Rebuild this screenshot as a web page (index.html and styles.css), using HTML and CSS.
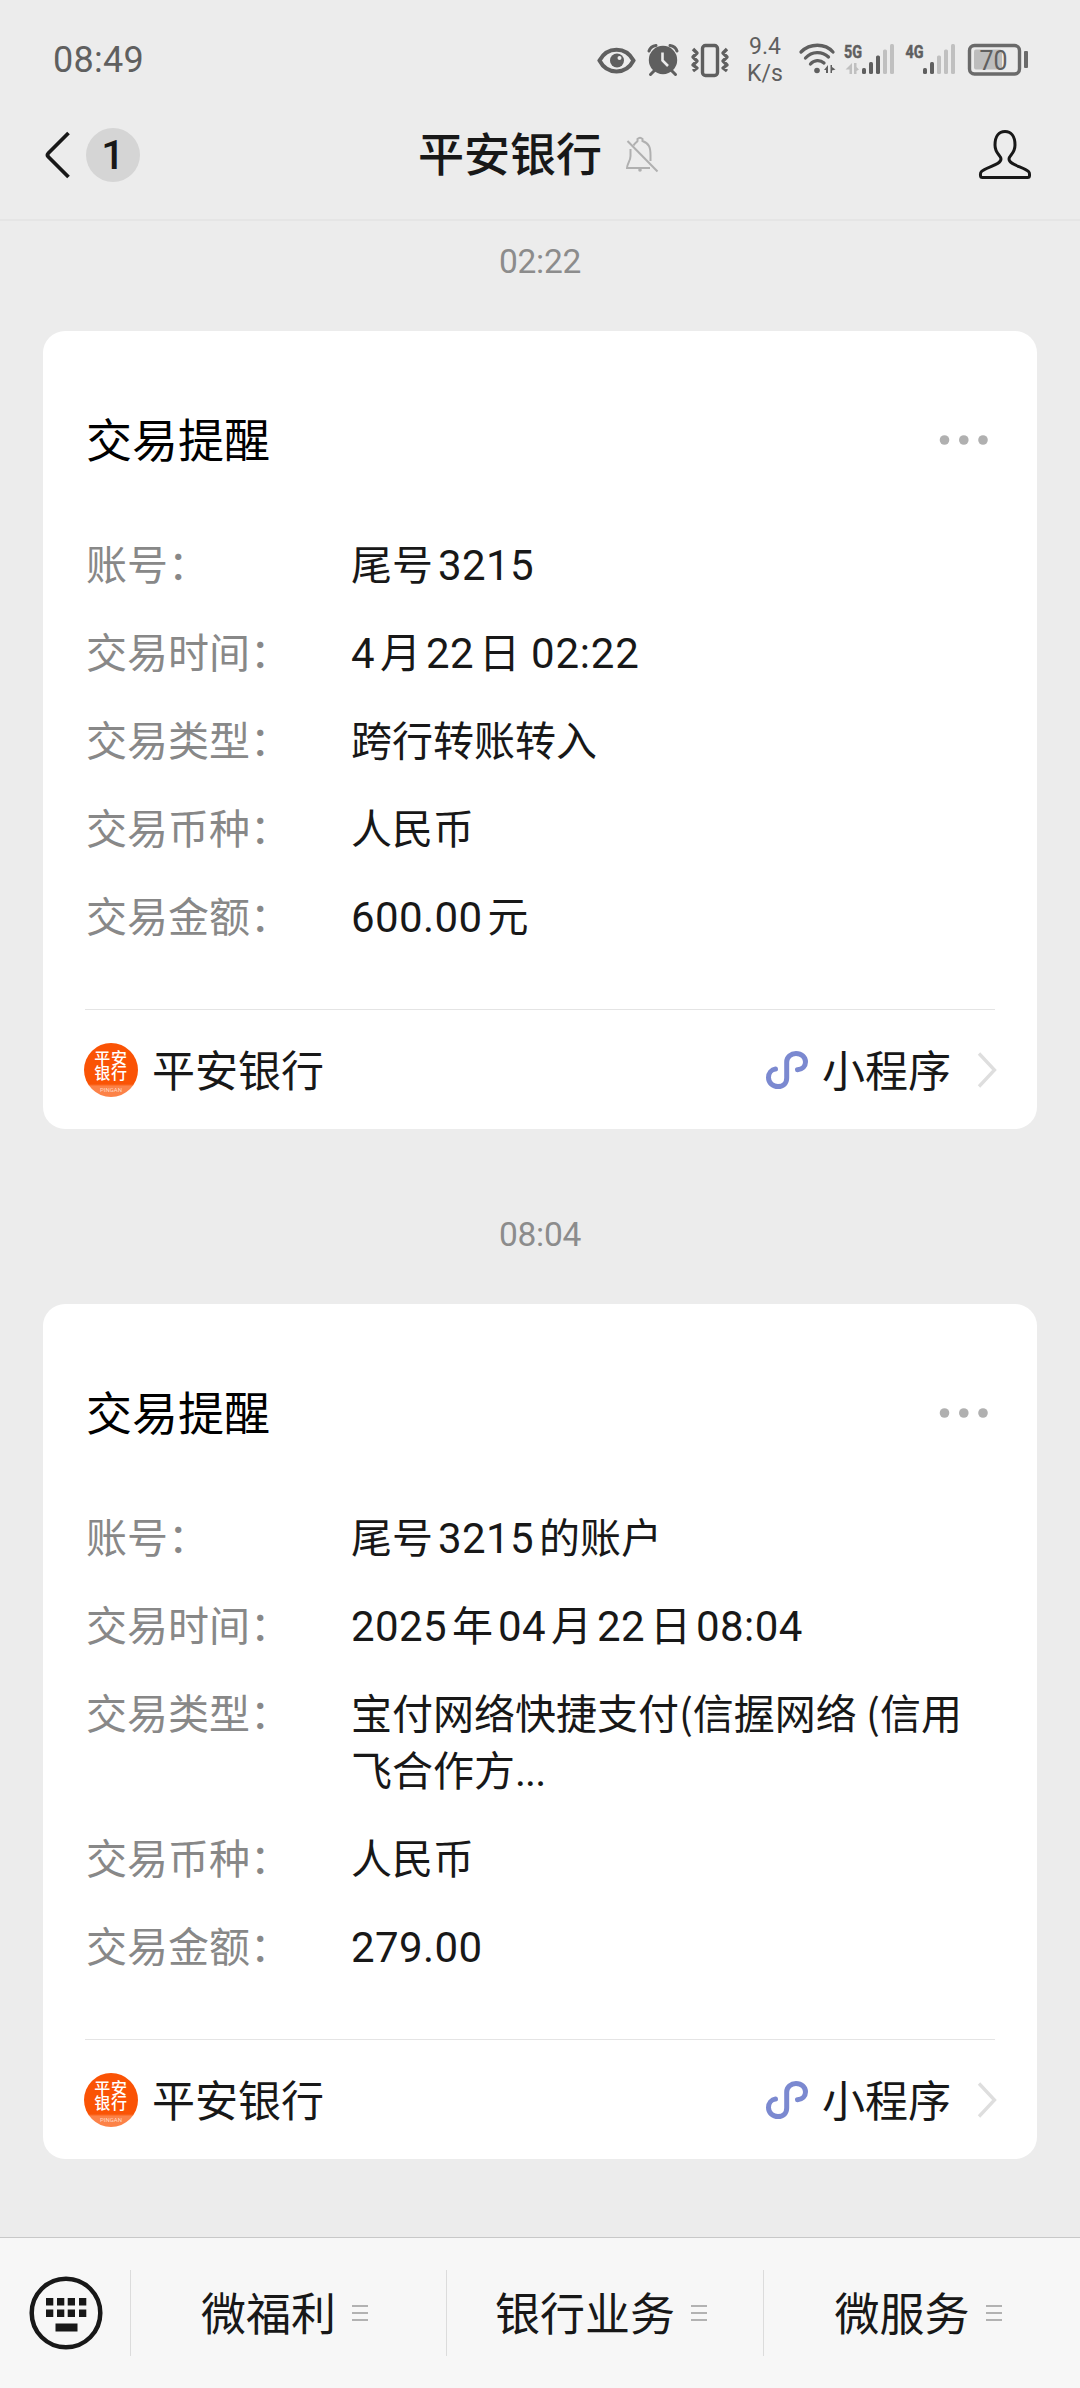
FILE: index.html
```html
<!DOCTYPE html>
<html lang="zh-CN">
<head>
<meta charset="utf-8">
<title>平安银行</title>
<link rel="stylesheet" href="styles.css">
</head>
<body>
<svg class="defs" aria-hidden="true">
  <symbol id="mini" viewBox="0 0 42 38">
    <path d="M9.500 18C5.500 18.500 2.500 22 2.500 26.500C2.500 32 7 35.500 12 35.500C17.500 35.500 20.700 32 20.700 27V11C20.700 6 25 2.500 30 2.500C35.500 2.500 39.500 6 39.500 11C39.500 15 36.500 18.300 31.500 18.700" fill="none" stroke="#7b89d0" stroke-width="5" stroke-linecap="round"/>
  </symbol>
  <symbol id="next" viewBox="0 0 20 36">
    <path d="M2 1.500L17.500 18L2 34.500" fill="none" stroke="#dedede" stroke-width="3.300"/>
  </symbol>
  <symbol id="dots" viewBox="0 0 50 12">
    <g fill="#b0b0b0"><circle cx="5.500" cy="6" r="4.800"/><circle cx="24.800" cy="6" r="4.800"/><circle cx="44" cy="6" r="4.800"/></g>
  </symbol>
  <symbol id="lines" viewBox="0 0 16 18">
    <path d="M0 2H16M0 9H16M0 16H16" stroke="#b2b2b2" stroke-width="2"/>
  </symbol>
</svg>

<div class="status">
  <span class="clock">08:49</span>
  <div class="tray">
    <svg class="eye" viewBox="597 40 40 40">
      <path d="M599.500 60.500C607 46 626 46 633.500 60.500C626 75 607 75 599.500 60.500Z" fill="none" stroke="#5f5f5f" stroke-width="4"/>
      <circle cx="617" cy="60.500" r="7" fill="#5f5f5f"/><circle cx="619.500" cy="58" r="2" fill="#ececec"/>
    </svg>
    <svg class="alarm" viewBox="646 40 34 40">
      <circle cx="663" cy="60" r="14.200" fill="#5f5f5f"/>
      <path d="M649 51C650 48 652.500 46 656 45.500M677 51C676 48 673.500 46 670 45.500M654 71L650.500 74.500M672 71L675.500 74.500" fill="none" stroke="#5f5f5f" stroke-width="3" stroke-linecap="round"/>
      <path d="M662.500 52.500V60.500L668 66" fill="none" stroke="#ececec" stroke-width="2.600"/>
    </svg>
    <svg class="vibrate" viewBox="690 40 40 40">
      <rect x="702.500" y="45.500" width="15" height="30" rx="3" fill="none" stroke="#5f5f5f" stroke-width="3.400"/>
      <path d="M693 49L697 53L693 57L697 61L693 65L697 68L693 71M727 49L723 53L727 57L723 61L727 65L723 68L727 71" fill="none" stroke="#5f5f5f" stroke-width="3.400" stroke-linejoin="round"/>
    </svg>
    <div class="speed"><span>9.4</span><span>K/s</span></div>
    <svg class="wifi" viewBox="798 40 40 40">
      <g fill="none" stroke="#5f5f5f" stroke-width="3.300" stroke-linecap="round">
        <path d="M801 52C810 43 825 43 833 52"/><path d="M805.500 58C812 51 822 51 828.500 57"/><path d="M810.500 64C814 60 820 59.500 824 63"/>
      </g>
      <circle cx="817" cy="70.500" r="2.800" fill="#5f5f5f"/>
      <path d="M828 65V73H826V70H824ZM830.500 65V73H832V70.500L835.500 69.500L832 67V65Z" fill="#5f5f5f"/>
    </svg>
    <svg class="signal" viewBox="843 40 52 40">
      <text x="844" y="57.500" class="net" textLength="18" lengthAdjust="spacingAndGlyphs">5G</text>
      <path d="M852 63V74H849.500V69.500H845.500ZM854 63V74H856.500V71L859 69.500L856.500 67V63Z" fill="#c0c0c0"/>
      <g fill="#5f5f5f"><rect x="862" y="68" width="4" height="6" rx="1.500"/><rect x="869" y="62" width="4" height="12" rx="1.500"/><rect x="876" y="55.500" width="4" height="18.500" rx="1.500"/></g>
      <g fill="#c0c0c0"><rect x="883" y="49.500" width="4" height="24.500" rx="1.500"/><rect x="890" y="44" width="4" height="30" rx="1.500"/></g>
    </svg>
    <svg class="signal second" viewBox="904 40 52 40">
      <text x="905.500" y="57.500" class="net" textLength="18" lengthAdjust="spacingAndGlyphs">4G</text>
      <g fill="#5f5f5f"><rect x="923" y="68" width="4" height="6" rx="1.500"/><rect x="930" y="62" width="4" height="12" rx="1.500"/></g>
      <g fill="#c0c0c0"><rect x="937" y="55.500" width="4" height="18.500" rx="1.500"/><rect x="944" y="49.500" width="4" height="24.500" rx="1.500"/><rect x="951" y="44" width="4" height="30" rx="1.500"/></g>
    </svg>
    <svg class="battery" viewBox="966 40 64 40">
      <rect x="969.500" y="45.500" width="50" height="28.500" rx="5" fill="none" stroke="#6a6a6a" stroke-width="3.400"/>
      <rect x="974" y="49.500" width="28" height="20" rx="2" fill="#bdbdbd"/>
      <rect x="1024" y="51" width="4" height="17" rx="1" fill="#6a6a6a"/>
      <text x="979.500" y="69.500" class="level" textLength="28" lengthAdjust="spacingAndGlyphs">70</text>
    </svg>
  </div>
</div>

<header class="nav">
  <div class="back">
    <svg width="26" height="48" viewBox="0 0 26 48"><path d="M23.500 2L3.500 22Q1.500 24 3.500 26L23.500 46" fill="none" stroke="#181818" stroke-width="3.800"/></svg>
    <span class="unread">1</span>
  </div>
  <div class="name">
    <h1>平安银行</h1>
    <svg width="34" height="38" viewBox="625 136 34 38">
      <path d="M630.500 149V156C630.500 161 627 164 627 168H650M633.500 145.500C635 143 637 142 637.500 141V139Q640 136.500 642.500 139V141C649 143.500 650.500 147 650.500 155V161" fill="none" stroke="#b0b0b0" stroke-width="2"/>
      <path d="M627.500 141L657.500 171.500" stroke="#b0b0b0" stroke-width="2"/><circle cx="640" cy="170" r="1.800" fill="#b0b0b0"/>
    </svg>
  </div>
  <svg class="person" width="54" height="52" viewBox="978 130 54 52">
    <path d="M995 146C995 137 999 132.500 1005 132.500C1011 132.500 1015 137 1015 146C1015 155 1009 156 1009 160C1009 166 1024 168 1028.500 172.500C1030 174 1029.500 176 1029.500 176.500Q1029.500 178.500 1027.500 178.500H982.500Q980.500 178.500 980.500 176.500C980.500 176 980 174 981.500 172.500C986 168 1001 166 1001 160C1001 156 995 155 995 146Z" fill="none" stroke="#181818" stroke-width="3"/>
  </svg>
</header>

<main class="chat">
  <time>02:22</time>
  <section class="card">
    <div class="head"><h2>交易提醒</h2><svg width="50" height="12"><use href="#dots"/></svg></div>
    <dl>
      <dt>账号：</dt><dd>尾号<b class="after">3215</b></dd>
      <dt>交易时间：</dt><dd><b class="before">4</b>月<b class="both">22</b>日<b class="spaced">02:22</b></dd>
      <dt>交易类型：</dt><dd>跨行转账转入</dd>
      <dt>交易币种：</dt><dd>人民币</dd>
      <dt>交易金额：</dt><dd><b class="before">600.00</b>元</dd>
    </dl>
    <footer>
      <span class="logo"><span class="mark">平安<br>银行</span><span class="latin">PINGAN</span></span>
      <span class="bank">平安银行</span>
      <svg width="42" height="38"><use href="#mini"/></svg>
      <span class="app">小程序</span>
      <svg class="next" width="20" height="36"><use href="#next"/></svg>
    </footer>
  </section>

  <time class="later">08:04</time>
  <section class="card">
    <div class="head"><h2>交易提醒</h2><svg width="50" height="12"><use href="#dots"/></svg></div>
    <dl>
      <dt>账号：</dt><dd>尾号<b class="both">3215</b>的账户</dd>
      <dt>交易时间：</dt><dd><b class="before">2025</b>年<b class="both">04</b>月<b class="both">22</b>日<b class="after">08:04</b></dd>
      <dt>交易类型：</dt><dd>宝付网络快捷支付(信握网络 (信用<br>飞合作方<b class="more">...</b></dd>
      <dt>交易币种：</dt><dd>人民币</dd>
      <dt>交易金额：</dt><dd><b>279.00</b></dd>
    </dl>
    <footer>
      <span class="logo"><span class="mark">平安<br>银行</span><span class="latin">PINGAN</span></span>
      <span class="bank">平安银行</span>
      <svg width="42" height="38"><use href="#mini"/></svg>
      <span class="app">小程序</span>
      <svg class="next" width="20" height="36"><use href="#next"/></svg>
    </footer>
  </section>
</main>

<nav class="menu">
  <div class="keyboard">
    <svg width="74" height="74" viewBox="0 0 74 74">
      <circle cx="37" cy="37" r="34.300" fill="none" stroke="#181818" stroke-width="4.500"/>
      <path d="M17 22h7.300v7.500H17zM28 22h7.300v7.500H28zM38.700 22H46v7.500h-7.300zM50 22h7.300v7.500H50zM17 33.500h7.300V41H17zM28 33.500h7.300V41H28zM38.700 33.500H46V41h-7.300zM50 33.500h7.300V41H50zM26.500 47.500h22v8h-22z" fill="#181818"/>
    </svg>
  </div>
  <a><span>微福利</span><svg width="16" height="18"><use href="#lines"/></svg></a>
  <a><span>银行业务</span><svg width="16" height="18"><use href="#lines"/></svg></a>
  <a><span>微服务</span><svg width="16" height="18"><use href="#lines"/></svg></a>
</nav>
</body>
</html>
```
FILE: styles.css
```css
* { box-sizing: border-box; margin: 0; padding: 0; }

body {
  width: 1080px;
  height: 2388px;
  display: flex;
  flex-direction: column;
  background: #ececec;
  color: #181818;
  font-family: "Noto Sans CJK SC", sans-serif;
  font-weight: 400;
}

svg { display: block; flex: none; }
.defs { display: none; }

/* Status bar */
.status {
  height: 118px;
  padding: 0 50px 0 53px;
  display: flex;
  align-items: center;
  justify-content: space-between;
  color: #5f5f5f;
  font-family: Roboto, sans-serif;
}
.clock { padding-top: 2px; font-size: 36px; letter-spacing: .3px; }
.tray { display: flex; align-items: center; padding-top: 2px; }
.tray svg { height: 40px; }
.eye { width: 40px; }
.alarm { width: 34px; margin-left: 9px; }
.vibrate { width: 40px; margin-left: 10px; }
.speed {
  width: 40px;
  margin: 0 13px 0 15px;
  display: flex;
  flex-direction: column;
  align-items: center;
  font-size: 23px;
  line-height: 27px;
}
.wifi { width: 40px; }
.signal { width: 52px; margin-left: 5px; }
.signal.second { margin-left: 9px; }
.battery { width: 64px; margin-left: 10px; }
.net { font: 700 18px Roboto, sans-serif; fill: #5f5f5f; stroke: #5f5f5f; stroke-width: .5px; }
.level { font: 400 28px Roboto, sans-serif; fill: #5f5f5f; }

/* Title bar */
.nav {
  height: 103px;
  padding: 0 48px 28px 45px;
  display: grid;
  grid-template-columns: 1fr auto 1fr;
  align-items: center;
  border-bottom: 2px solid #e5e5e5;
}
.back { display: flex; align-items: center; gap: 15px; }
.unread {
  width: 54px;
  height: 54px;
  border-radius: 50%;
  background: #d5d5d5;
  font: 500 41px/55px Roboto, sans-serif;
  text-align: center;
}
.name { display: flex; align-items: center; gap: 23px; }
.name h1 { padding-bottom: 7px; font-size: 46px; font-weight: 500; line-height: 60px; }
.person { justify-self: end; }

/* Conversation */
.chat { flex: 1; padding: 0 43px; }
time {
  display: block;
  padding-top: 20px;
  height: 110px;
  text-align: center;
  color: #8c8c8c;
  font: 400 33.500px/42px Roboto, sans-serif;
  letter-spacing: -.3px;
}
time.later { height: 175px; padding-top: 85px; }

.card { padding: 0 42px; background: #fff; border-radius: 22px; }
.head {
  height: 203px;
  padding: 14px 6px 0 1px;
  display: flex;
  align-items: center;
  justify-content: space-between;
}
.head h2 { padding-bottom: 6px; color: #000; font-size: 46px; font-weight: 400; line-height: 60px; }

dl {
  padding-left: 1px;
  display: grid;
  grid-template-columns: 265px 1fr;
  row-gap: 31px;
  font-size: 41px;
  line-height: 57px;
  white-space: nowrap;
}
dt { color: #888; }
dd b { font: 400 42px/1 Roboto, sans-serif; letter-spacing: .4px; }
.before { margin-right: 5px; }
.after { margin-left: 5px; }
.both { margin: 0 5px; }
dd .spaced { margin-left: 11px; letter-spacing: .8px; }
dd .more { letter-spacing: -1px; }

.card footer {
  height: 120px;
  margin-top: 66px;
  border-top: 1px solid #e4e4e4;
  display: flex;
  align-items: center;
  font-size: 43px;
  line-height: 60px;
}
.logo {
  width: 54px;
  height: 54px;
  margin: 0 14px 0 -1px;
  padding-top: 7px;
  border-radius: 50%;
  overflow: hidden;
  background: linear-gradient(#fa5305 76%, #fc8248 80%);
  color: #fff;
  text-align: center;
}
.mark { display: block; font-size: 16px; font-weight: 500; line-height: 15px; letter-spacing: .7px; }
.latin { display: block; font: 400 6px/7px Roboto, sans-serif; margin-top: 6px; color: #ffd8c4; }
.bank { flex: 1; padding-bottom: 4px; }
.app { margin: 0 26px 0 14px; padding-bottom: 4px; }
.next { margin-right: -2px; }

/* Service menu */
.menu {
  height: 151px;
  display: grid;
  grid-template-columns: 130px 316px 317px 317px;
  align-items: center;
  background: #f7f7f7;
  border-top: 1.500px solid #c8c8c8;
}
.keyboard { padding-left: 29px; }
.menu a {
  height: 86px;
  padding-right: 8px;
  display: flex;
  align-items: center;
  justify-content: center;
  gap: 16px;
  border-left: 1px solid #dcdcdc;
  font-size: 45px;
}
.menu span { padding-bottom: 4px; }
```
